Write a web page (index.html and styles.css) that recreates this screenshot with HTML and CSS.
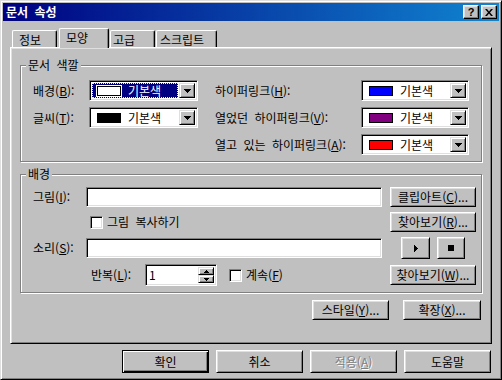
FILE: index.html
```html
<!DOCTYPE html>
<html lang="ko">
<head>
<meta charset="utf-8">
<title>문서 속성</title>
<link rel="stylesheet" href="styles.css">
</head>
<body>
<div class="window">
  <div class="titlebar">
    <span class="title">문서 속성</span>
    <div class="tb-buttons">
      <span class="tb-btn tb-help">?</span>
      <span class="tb-btn tb-close"><svg width="8" height="7" viewBox="0 0 8 7"><path d="M0 0h2l2 2.4L6 0h2L5 3.5 8 7H6L4 4.6 2 7H0l3-3.5z" fill="#000"/></svg></span>
    </div>
  </div>
  <div class="client">
    <div class="tabs">
      <div class="tab tab-info">정보</div>
      <div class="tab tab-look active">모양</div>
      <div class="tab tab-adv">고급</div>
      <div class="tab tab-script">스크립트</div>
    </div>
    <div class="panel">
      <div class="group g-colors">
        <span class="group-label">문서 색깔</span>

        <span class="lbl lbl-l">배경(<u>B</u>):</span>
        <div class="combo combo-l focused">
          <div class="combo-val"><span class="swatch sw-white"></span><span class="cv-text">기본색</span></div>
          <span class="drop"><svg width="7" height="4" viewBox="0 0 7 4"><path d="M0 0h7L3.5 4z" fill="#000"/></svg></span>
        </div>
        <span class="lbl lbl-r">하이퍼링크(<u>H</u>):</span>
        <div class="combo combo-r">
          <div class="combo-val"><span class="swatch sw-blue"></span><span class="cv-text">기본색</span></div>
          <span class="drop"><svg width="7" height="4" viewBox="0 0 7 4"><path d="M0 0h7L3.5 4z" fill="#000"/></svg></span>
        </div>

        <span class="lbl lbl-l">글씨(<u>T</u>):</span>
        <div class="combo combo-l">
          <div class="combo-val"><span class="swatch sw-black"></span><span class="cv-text">기본색</span></div>
          <span class="drop"><svg width="7" height="4" viewBox="0 0 7 4"><path d="M0 0h7L3.5 4z" fill="#000"/></svg></span>
        </div>
        <span class="lbl lbl-r">열었던 하이퍼링크(<u>V</u>):</span>
        <div class="combo combo-r">
          <div class="combo-val"><span class="swatch sw-purple"></span><span class="cv-text">기본색</span></div>
          <span class="drop"><svg width="7" height="4" viewBox="0 0 7 4"><path d="M0 0h7L3.5 4z" fill="#000"/></svg></span>
        </div>

        <span class="lbl lbl-r">열고 있는 하이퍼링크(<u>A</u>):</span>
        <div class="combo combo-r">
          <div class="combo-val"><span class="swatch sw-red"></span><span class="cv-text">기본색</span></div>
          <span class="drop"><svg width="7" height="4" viewBox="0 0 7 4"><path d="M0 0h7L3.5 4z" fill="#000"/></svg></span>
        </div>
      </div>

      <div class="group g-bg">
        <span class="group-label">배경</span>

        <span class="lbl c1">그림(<u>I</u>):</span>
        <div class="field c2"></div>
        <div class="btn c4">클립아트(<u>C</u>)...</div>

        <div class="check-line c2">
          <span class="checkbox"></span><span>그림 복사하기</span>
        </div>
        <div class="btn c4">찾아보기(<u>R</u>)...</div>

        <span class="lbl c1">소리(<u>S</u>):</span>
        <div class="field c2"></div>
        <div class="media c4">
          <div class="btn btn-play"><svg width="4" height="7" viewBox="0 0 4 7"><path d="M0 0l4 3.5L0 7z" fill="#000"/></svg></div>
          <div class="btn btn-stop"><svg width="6" height="6" viewBox="0 0 6 6"><rect width="6" height="6" fill="#000"/></svg></div>
        </div>

        <div class="repeat-line c12">
          <span class="rep-lbl">반복(<u>L</u>):</span>
          <div class="spin">
            <span class="spin-val">1</span>
            <div class="spin-btns">
              <span class="spin-btn"><svg width="5" height="3" viewBox="0 0 5 3"><path d="M2.5 0L5 3H0z" fill="#000"/></svg></span>
              <span class="spin-btn"><svg width="5" height="3" viewBox="0 0 5 3"><path d="M0 0h5L2.5 3z" fill="#000"/></svg></span>
            </div>
          </div>
          <span class="checkbox cb-loop"></span><span class="loop-text">계속(<u>F</u>)</span>
        </div>
        <div class="btn c4">찾아보기(<u>W</u>)...</div>
      </div>

      <div class="panel-buttons">
        <div class="btn btn-style">스타일(<u>Y</u>)...</div>
        <div class="btn btn-ext">확장(<u>X</u>)...</div>
      </div>
    </div>

    <div class="dlg-buttons">
      <div class="btn btn-dlg default">확인</div>
      <div class="btn btn-dlg">취소</div>
      <div class="btn btn-dlg disabled">적용(<u>A</u>)</div>
      <div class="btn btn-dlg">도움말</div>
    </div>
  </div>
</div>
</body>
</html>
```

FILE: styles.css
```css
* { box-sizing: border-box; }

html, body {
  margin: 0;
  padding: 0;
  background: #c0c0c0;
}

body {
  width: 502px;
  height: 380px;
  overflow: hidden;
  font-family: "Noto Sans CJK KR", "Noto Sans", sans-serif;
  font-size: 12px;
  line-height: 14px;
  word-spacing: 3px;
  color: #000;
}

u { text-decoration: underline; text-underline-offset: 1px; }

.window {
  width: 502px;
  height: 380px;
  border: 1px solid;
  border-color: #dfdfdf #000 #000 #dfdfdf;
  box-shadow: inset 1px 1px #fff, inset -1px -1px #808080;
  padding: 2px;
  background: #c0c0c0;
}

/* title bar */
.titlebar {
  height: 18px;
  display: flex;
  align-items: center;
  justify-content: space-between;
  padding: 0 2px 0 2px;
  background: linear-gradient(to right, #000080, #1084d0);
}

.title {
  color: #fff;
  font-weight: bold;
  font-size: 12px;
  line-height: 18px;
  margin-left: 1px;
}

.tb-buttons {
  display: flex;
  gap: 2px;
}

.tb-btn {
  width: 16px;
  height: 14px;
  display: flex;
  align-items: center;
  justify-content: center;
  background: #c0c0c0;
  border: 1px solid;
  border-color: #fff #000 #000 #fff;
  box-shadow: inset -1px -1px #808080, inset 1px 1px #dfdfdf;
}

.tb-help {
  font-family: "Liberation Sans", sans-serif;
  font-weight: bold;
  font-size: 11px;
  line-height: 12px;
}

/* client area */
.client {
  padding: 7px 7px 0 7px;
}

.tabs {
  height: 19px;
  display: flex;
  align-items: flex-end;
  padding-left: 2px;
  position: relative;
  z-index: 1;
}

.tab {
  height: 17px;
  border-left: 1px solid #fff;
  border-top: 1px solid #fff;
  border-right: 1px solid #000;
  border-radius: 2px 2px 0 0;
  box-shadow: inset -1px 0 #808080;
  background: #c0c0c0;
  line-height: 15px;
  padding-top: 1px;
}

.tab-info { width: 45px; margin-right: 2px; padding-left: 6px; }
.tab-look { width: 50px; margin-right: 1px; padding-left: 6px; }
.tab-adv { width: 45px; margin-right: 1px; padding-left: 2px; }
.tab-script { width: 61px; padding-left: 3px; }

.tab.active {
  height: 20px;
  margin-bottom: -1px;
  padding-top: 1px;
}

.panel {
  height: 297px;
  border: 1px solid;
  border-color: #fff #000 #000 #fff;
  box-shadow: inset 1px 1px #dfdfdf, inset -1px -1px #808080;
  padding: 17px 9px 0 9px;
}

/* group boxes */
.group {
  position: relative;
  border: 1px solid #808080;
  box-shadow: inset 1px 1px #fff, 1px 1px #fff;
}

.group-label {
  position: absolute;
  top: -8px;
  left: 5px;
  padding: 0 2px;
  background: #c0c0c0;
  line-height: 14px;
}

.g-colors {
  height: 97px;
  display: grid;
  grid-template-columns: 56px 109px 17px 146px 108px;
  grid-auto-rows: 21px;
  row-gap: 6px;
  padding: 14px 0 0 12px;
}

.lbl {
  align-self: center;
  white-space: nowrap;
}

.lbl-l { grid-column: 1; }
.combo-l { grid-column: 2; }
.lbl-r { grid-column: 4; }
.combo-r { grid-column: 5; }

.combo {
  height: 21px;
  display: flex;
  align-items: stretch;
  padding: 2px;
  background: #fff;
  border: 1px solid;
  border-color: #808080 #fff #fff #808080;
  box-shadow: inset 1px 1px #000, inset -1px -1px #dfdfdf;
}

.combo-val {
  flex: 1;
  display: flex;
  align-items: center;
  padding-left: 5px;
}

.combo.focused .combo-val {
  margin: 0 1px 0 0;
  padding-left: 4px;
  background: #000080;
  color: #fff;
  border: 1px dotted #ffff80;
}

.swatch {
  width: 24px;
  height: 10px;
  border: 1px solid #000;
  flex: none;
}

.sw-white { background: #fff; box-shadow: 0 0 0 1px #fff; }
.sw-black { background: #000; }
.sw-blue { background: #0000ff; }
.sw-purple { background: #800080; }
.sw-red { background: #ff0000; }

.cv-text { margin-left: 7px; }

.drop {
  width: 16px;
  flex: none;
  display: flex;
  align-items: center;
  justify-content: center;
  background: #c0c0c0;
  border: 1px solid;
  border-color: #dfdfdf #000 #000 #dfdfdf;
  box-shadow: inset 1px 1px #fff, inset -1px -1px #808080;
}

.drop svg, .btn svg, .spin-btn svg { display: block; shape-rendering: crispEdges; }

/* background group */
.g-bg {
  height: 119px;
  margin-top: 12px;
  display: grid;
  grid-template-columns: 53px 296px 8px 86px;
  grid-template-rows: 20px 20px 22px 22px;
  row-gap: 5px;
  padding: 12px 0 0 12px;
}

.c1 { grid-column: 1; }
.c2 { grid-column: 2; }
.c4 { grid-column: 4; }
.c12 { grid-column: 1 / 4; }

.field {
  height: 20px;
  align-self: center;
  background: #fff;
  border: 1px solid;
  border-color: #808080 #fff #fff #808080;
  box-shadow: inset 1px 1px #000, inset -1px -1px #dfdfdf;
}

.btn {
  display: flex;
  align-items: center;
  justify-content: center;
  background: #c0c0c0;
  border: 1px solid;
  border-color: #fff #000 #000 #fff;
  box-shadow: inset 1px 1px #dfdfdf, inset -1px -1px #808080;
  white-space: nowrap;
}

.g-bg .btn.c4 { height: 20px; align-self: center; }

.check-line {
  display: flex;
  align-items: center;
  padding-left: 4px;
}

.checkbox {
  width: 13px;
  height: 13px;
  flex: none;
  background: #fff;
  border: 1px solid;
  border-color: #808080 #fff #fff #808080;
  box-shadow: inset 1px 1px #000, inset -1px -1px #dfdfdf;
  margin-right: 4px;
}

.media {
  display: flex;
  gap: 7px;
  padding-left: 11px;
}

.btn-play { width: 29px; height: 22px; }
.btn-stop { width: 28px; height: 22px; }

.repeat-line {
  display: flex;
  align-items: center;
  padding-left: 58px;
}

.rep-lbl { width: 54px; }

.spin {
  width: 72px;
  height: 22px;
  display: flex;
  padding: 2px;
  background: #fff;
  border: 1px solid;
  border-color: #808080 #fff #fff #808080;
  box-shadow: inset 1px 1px #000, inset -1px -1px #dfdfdf;
}

.spin-val {
  flex: 1;
  padding-left: 1px;
  line-height: 16px;
}

.spin-btns {
  width: 16px;
  display: flex;
  flex-direction: column;
}

.spin-btn {
  flex: 1;
  display: flex;
  align-items: center;
  justify-content: center;
  background: #c0c0c0;
  border: 1px solid;
  border-color: #dfdfdf #000 #000 #dfdfdf;
  box-shadow: inset 1px 1px #fff, inset -1px -1px #808080;
}

.cb-loop { margin-left: 12px; }

/* buttons inside panel */
.panel-buttons {
  display: flex;
  justify-content: flex-end;
  gap: 14px;
  margin-top: 7px;
  margin-right: 1px;
}

.btn-style { width: 77px; height: 20px; }
.btn-ext { width: 78px; height: 20px; }

/* dialog buttons */
.dlg-buttons {
  display: flex;
  justify-content: flex-end;
  gap: 7px;
  margin-top: 6px;
  margin-right: 1px;
}

.btn-dlg {
  width: 87px;
  height: 23px;
}

.btn-dlg.default {
  border-color: #000;
  box-shadow: inset 1px 1px #fff, inset -1px -1px #000, inset -2px -2px #808080;
}

.btn-dlg.disabled {
  color: #808080;
  text-shadow: 1px 1px 0 #fff;
}
```
